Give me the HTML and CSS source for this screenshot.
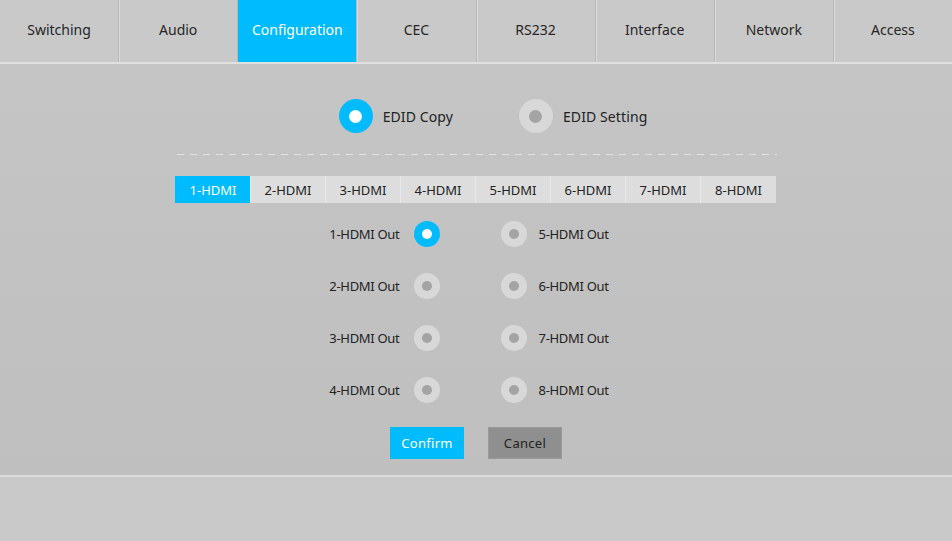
FILE: index.html
```html
<!DOCTYPE html>
<html>
<head>
<meta charset="utf-8">
<link rel="stylesheet" href="styles.css">
</head>
<body>
<nav class="nav">
  <div class="nav-tab">Switching</div>
  <div class="nav-tab">Audio</div>
  <div class="nav-tab active">Configuration</div>
  <div class="nav-tab">CEC</div>
  <div class="nav-tab">RS232</div>
  <div class="nav-tab">Interface</div>
  <div class="nav-tab">Network</div>
  <div class="nav-tab">Access</div>
</nav>
<main class="panel">
  <div class="mode-row">
    <label class="mode"><span class="radio big on"></span><span>EDID Copy</span></label>
    <label class="mode"><span class="radio big"></span><span>EDID Setting</span></label>
  </div>
  <div class="dash"></div>
  <div class="inputs">
    <div class="in-tab active">1-HDMI</div>
    <div class="in-tab">2-HDMI</div>
    <div class="in-tab">3-HDMI</div>
    <div class="in-tab">4-HDMI</div>
    <div class="in-tab">5-HDMI</div>
    <div class="in-tab">6-HDMI</div>
    <div class="in-tab">7-HDMI</div>
    <div class="in-tab">8-HDMI</div>
  </div>
  <div class="outs">
    <div class="out left"><span>1-HDMI Out</span><span class="radio on"></span></div>
    <div class="out right"><span class="radio"></span><span>5-HDMI Out</span></div>
    <div class="out left"><span>2-HDMI Out</span><span class="radio"></span></div>
    <div class="out right"><span class="radio"></span><span>6-HDMI Out</span></div>
    <div class="out left"><span>3-HDMI Out</span><span class="radio"></span></div>
    <div class="out right"><span class="radio"></span><span>7-HDMI Out</span></div>
    <div class="out left"><span>4-HDMI Out</span><span class="radio"></span></div>
    <div class="out right"><span class="radio"></span><span>8-HDMI Out</span></div>
  </div>
  <div class="buttons">
    <button class="btn confirm">Confirm</button>
    <button class="btn cancel">Cancel</button>
  </div>
</main>
<footer class="footer"></footer>
</body>
</html>
```
FILE: styles.css
```css
* { box-sizing: border-box; }
html, body { margin: 0; height: 100%; }
body {
  background: #c9c9c9;
  font-family: "Noto Sans", "Open Sans", sans-serif;
  color: #262626;
}
.nav {
  display: flex;
  height: 64px;
  border-bottom: 2px solid #e0e0e0;
  background: #c9c9c9;
}
.nav-tab {
  flex: 1;
  display: flex;
  align-items: center;
  justify-content: center;
  font-size: 14px;
  padding-bottom: 4px;
  border-left: 1px solid #b9b9b9;
  box-shadow: inset 1px 0 0 #dadada;
}
.nav-tab:first-child { border-left: none; box-shadow: none; }
.nav-tab.active {
  background: #00bbfe;
  color: #fff;
  border-left-color: #b9b9b9;
  box-shadow: none;
}
.panel {
  height: 413px;
  background: linear-gradient(180deg, #c5c5c5 0%, #c1c1c1 60%, #bfbfbf 100%);
  border-bottom: 2px solid #dcdcdc;
  padding-top: 35px;
  display: flex;
  flex-direction: column;
  align-items: center;
}
.mode-row {
  display: flex;
  gap: 66px;
  padding-left: 34px;
  height: 34px;
}
.mode {
  display: flex;
  align-items: center;
  gap: 10px;
  font-size: 14px;
  letter-spacing: 0.1px;
  color: #222;
}
.radio {
  width: 26px;
  height: 26px;
  border-radius: 50%;
  background: #d8d8d8;
  display: flex;
  align-items: center;
  justify-content: center;
  flex: none;
}
.radio::after {
  content: "";
  width: 10px;
  height: 10px;
  border-radius: 50%;
  background: #a4a4a4;
}
.radio.on { background: #00bbfe; }
.radio.on::after { background: #fff; }
.radio.big { width: 34px; height: 34px; }
.radio.big::after { width: 13px; height: 13px; }
.dash {
  width: 600px;
  height: 1px;
  margin-top: 21px;
  margin-left: 1px;
  background: repeating-linear-gradient(90deg, #e3e3e3 0 7px, transparent 7px 13px);
}
.inputs {
  display: flex;
  width: 601px;
  height: 27px;
  margin-top: 21px;
  margin-right: 1px;
}
.in-tab {
  width: 75px;
  flex: none;
  display: flex;
  align-items: center;
  justify-content: center;
  background: #dddddd;
  border-left: 1px solid #e8e8e8;
  font-size: 13px;
  color: #222;
}
.in-tab:last-child { width: 76px; }
.in-tab.active {
  background: #00bbfe;
  color: #fff;
  border-left-color: #00bbfe;
}
.outs {
  display: grid;
  grid-template-columns: 264px 1fr;
  grid-auto-rows: 52px;
  column-gap: 61px;
  width: 601px;
  margin-top: 5px;
}
.out {
  display: flex;
  align-items: center;
  font-size: 13px;
  letter-spacing: -0.3px;
  color: #222;
}
.out.left { justify-content: flex-end; gap: 14px; }
.out.right { gap: 12px; }
.buttons {
  display: flex;
  gap: 24px;
  margin-top: 11px;
}
.btn {
  width: 74px;
  height: 32px;
  border: none;
  font-family: "Noto Sans", "Open Sans", sans-serif;
  font-size: 13px;
  letter-spacing: 0.3px;
  padding: 0;
}
.btn.confirm { background: #00bbfe; color: #fff; }
.btn.cancel { background: #8f8f8f; color: #222; box-shadow: inset 0 0 0 1px #999; }
.footer { height: 64px; }
```
